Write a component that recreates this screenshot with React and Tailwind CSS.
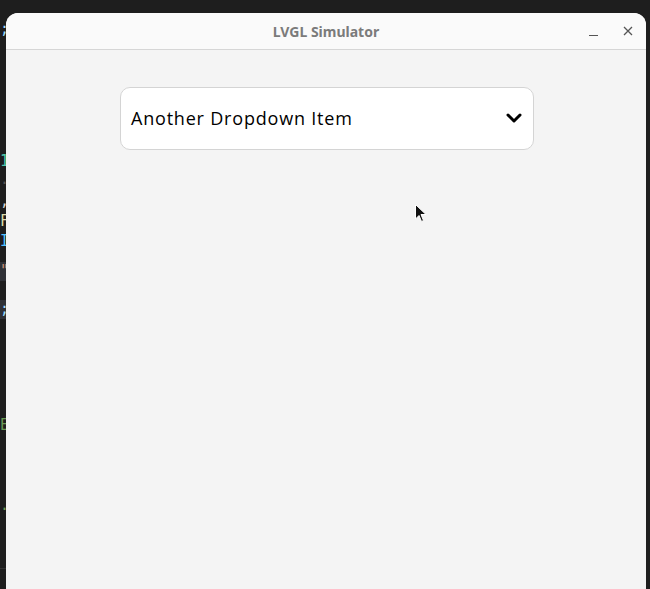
import React from "react";

function CodeStrip() {
  const mono = { fontFamily: '"DejaVu Sans Mono", monospace' };
  return (
    <div className="w-[6px] shrink-0 overflow-hidden flex flex-col text-[15px] leading-[18px]" style={mono}>
      <div className="h-[20px]" />
      <div className="h-[18px] text-[#9cdcfe]">;</div>
      <div className="h-[114px]" />
      <div className="h-[18px] text-[#4ec9b0]">1</div>
      <div className="h-[22px] text-[#555]">.</div>
      <div className="h-[20px] text-[#d4d4d4]">,</div>
      <div className="h-[20px] text-[#dcdcaa]">F</div>
      <div className="h-[20px] text-[#4fc1ff]">I</div>
      <div className="h-[10px]" />
      <div className="h-[19px] bg-[#2f3136] text-[#ce9178] leading-[19px]">"</div>
      <div className="h-[19px]" />
      <div className="h-[19px] bg-[#2f3136] text-[#9cdcfe] leading-[19px]">;</div>
      <div className="h-[97px]" />
      <div className="h-[20px] text-[#6a9955]">E</div>
      <div className="h-[60px]" />
      <div className="h-[20px] text-[#6a9955]">.</div>
      <div className="h-[52px]" />
      <div className="h-[1px] bg-[#333]" />
    </div>
  );
}

export default function App() {
  return (
    <div className="w-[650px] h-[589px] bg-[#1e1e1e] flex overflow-hidden relative">
      <CodeStrip />
      <div className="w-[640px] mt-[13px] h-[600px] shrink-0 flex flex-col rounded-t-[12px] overflow-hidden bg-[#f4f4f4]">
        <div className="h-[37px] shrink-0 bg-[#fafafa] border-b border-[#d6d6d6] flex items-center relative">
          <div
            className="flex-1 text-center text-[14px] font-bold text-[#7b7b7b]"
            style={{ fontFamily: '"Noto Sans", sans-serif' }}
          >
            LVGL Simulator
          </div>
          <div className="absolute right-[12px] top-0 h-full flex items-center gap-[22px]">
            <svg width="12" height="12" viewBox="0 0 12 12">
              <path d="M1 10.5 H10" stroke="#555" strokeWidth="1.2" />
            </svg>
            <svg width="12" height="12" viewBox="0 0 12 12">
              <path d="M2 2 L10 10 M10 2 L2 10" stroke="#555" strokeWidth="1.3" />
            </svg>
          </div>
        </div>
        <div className="flex-1 flex flex-col items-center pt-[37px] pl-[2px]">
          <div className="w-[414px] h-[63px] bg-white border border-[#d4d4d4] rounded-[10px] flex items-center justify-between pl-[10px] pr-[11px]">
            <span
              className="text-[18px] text-black tracking-[0.8px]"
              style={{ fontFamily: '"Open Sans", sans-serif' }}
            >
              Another Dropdown Item
            </span>
            <svg width="16" height="11" viewBox="0 0 16 11">
              <path d="M2 2 L8 8 L14 2" fill="none" stroke="#000" strokeWidth="3" strokeLinecap="round" strokeLinejoin="round" />
            </svg>
          </div>
        </div>
      </div>
      <svg className="absolute left-[414px] top-[203px]" width="14" height="22" viewBox="0 0 14 22">
        <path d="M1.5 1.5 L1.5 16 L5 12.5 L7.5 18.5 L9.5 17.5 L7 11.5 L12 11.5 Z" fill="#111" stroke="#fff" strokeWidth="1" strokeLinejoin="round" />
      </svg>
    </div>
  );
}
